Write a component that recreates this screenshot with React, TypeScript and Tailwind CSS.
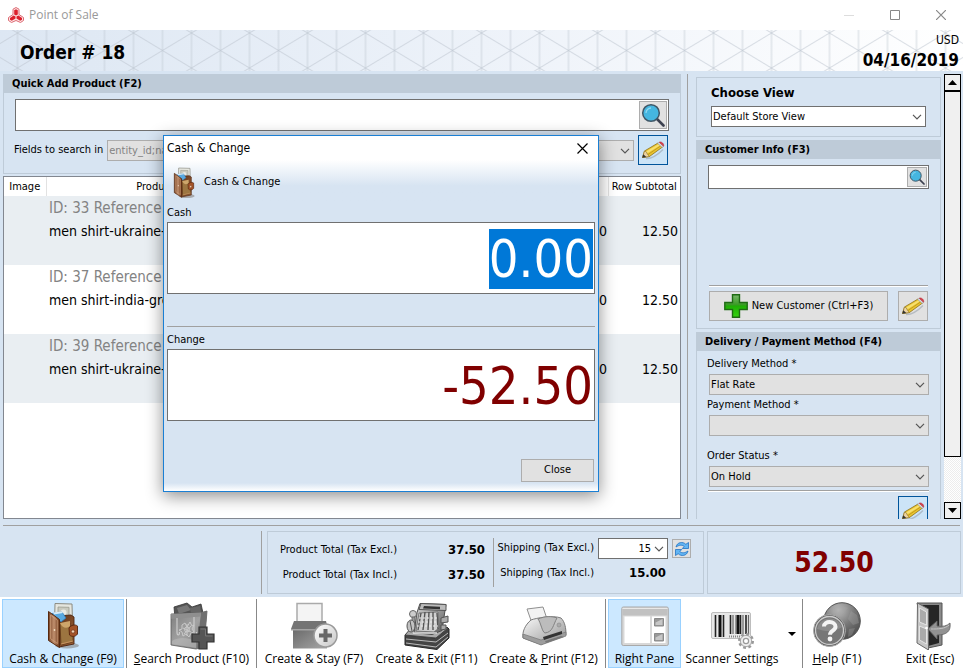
import { useEffect, useRef, type ReactNode } from "react";
import { clsx } from "clsx";

const UI_FONT = "font-['DejaVu_Sans_Condensed','DejaVu_Sans',sans-serif]";
const BAR_FONT = "font-['Open_Sans','Noto_Sans',sans-serif]";

const ROWS = [
  { id: 33, name: "men shirt-ukraine-", price: "12.50", subtotal: "12.50" },
  { id: 37, name: "men shirt-india-green", price: "12.50", subtotal: "12.50" },
  { id: 39, name: "men shirt-ukraine-", price: "12.50", subtotal: "12.50" },
];

/* ---------- icons ---------- */

function AppLogo() {
  return (
    <svg width="16" height="16" viewBox="0 0 16 16" aria-hidden="true">
      <path d="M8 .5 11 2.200v5.300l4.500 3v3l-3 2L8 13.500l-4.500 2-3-2v-3l4.500-3V2.200z" fill="#fbe3e4" stroke="#dd6a73" strokeWidth="1" />
      <path d="M8 2.200 9.800 3.200v4.300L8 8.500 6.200 7.500V3.200z" fill="#dc1f2b" />
      <path d="M7.500 9.500v2L3.800 13.800 2 12.800v-1.900l3.600-2.300z" fill="#dc1f2b" />
      <path d="M8.500 9.500v2l3.700 2.300 1.800-1v-1.900l-3.600-2.300z" fill="#dc1f2b" />
    </svg>
  );
}

function Magnifier({ className }: { className?: string }) {
  return (
    <svg viewBox="0 0 24 24" className={className} aria-hidden="true">
      <path d="m16 16 6.500 6.500" stroke="#3c4150" strokeWidth="2.600" strokeLinecap="round" />
      <circle cx="10" cy="10" r="8.300" fill="#45b6e0" stroke="#3f5767" strokeWidth="1.500" />
      <path d="M5 10a5 5 0 0 1 5-5" fill="none" stroke="#8fd8f0" strokeWidth="1.300" />
    </svg>
  );
}

function Pencil() {
  return (
    <svg width="24" height="24" viewBox="0 0 24 24" aria-hidden="true">
      <path d="M5 20.500c5 .4 10-2 17-9" stroke="#9aa4ad" strokeWidth="1.500" fill="none" opacity=".6" />
      <path d="M1.500 19.500 3.500 13 17 5l4.500 4-13 9.500z" fill="#e9c52f" stroke="#8d701d" strokeWidth=".8" />
      <path d="m4.500 13.800 13-7.600 1.300 1.200L6 15.500z" fill="#f7e070" />
      <path d="m7 16.500 13-8.800" stroke="#bf951b" strokeWidth=".9" />
      <path d="M1.500 19.500 3.500 13l2 1 .8 2 2.200 2.500z" fill="#ecd3a2" stroke="#8d701d" strokeWidth=".6" />
      <path d="m1.300 19.700 1-3.400 3 2.600z" fill="#333" />
      <path d="m16.500 5.300 1.700-1 4.300 3.900-1.400 1.200z" fill="#d9dde0" stroke="#8d8d8d" strokeWidth=".5" />
      <path d="M18.300 4.200c2.200-1 5 1.700 4.300 4z" fill="#e0424e" stroke="#b22936" strokeWidth=".6" />
    </svg>
  );
}

function PlusIcon() {
  return (
    <svg width="24" height="24" viewBox="0 0 24 24" aria-hidden="true">
      <defs>
        <linearGradient id="plus" x2="0" y2="1">
          <stop offset="0" stopColor="#7bb96c" />
          <stop offset=".45" stopColor="#3a9a26" />
          <stop offset=".5" stopColor="#1fae05" />
          <stop offset="1" stopColor="#35d510" />
        </linearGradient>
      </defs>
      <path d="M8.500.8h7v7.700h7.700v7h-7.700v7.700h-7v-7.700H.8v-7h7.700z" fill="url(#plus)" stroke="#1f6b14" strokeWidth="1.400" />
    </svg>
  );
}

function RefreshIcon() {
  return (
    <svg width="16" height="16" viewBox="0 0 16 16" aria-hidden="true">
      <path d="M2 6C3 1 9 .3 11.800 3.300L14.500 1.500v6H8.300l1.900-2C8 3.500 5 4 2 6z" fill="#63b5f3" stroke="#2272c3" strokeWidth=".8" />
      <path d="M14 10c-1 5-7 5.700-9.800 2.700L1.500 14.500v-6h6.200l-1.900 2C8 12.500 11 12 14 10z" fill="#63b5f3" stroke="#2272c3" strokeWidth=".8" />
    </svg>
  );
}

function Wallet({ className }: { className?: string }) {
  return (
    <svg viewBox="0 0 32 48" className={className} aria-hidden="true">
      <defs>
        <linearGradient id="leather" x2="1">
          <stop offset="0" stopColor="#7a4526" />
          <stop offset=".5" stopColor="#c08f6e" />
          <stop offset="1" stopColor="#6b3517" />
        </linearGradient>
        <linearGradient id="back" x2="1" y2="1">
          <stop offset="0" stopColor="#5a3017" />
          <stop offset="1" stopColor="#a06237" />
        </linearGradient>
      </defs>
      <ellipse cx="20" cy="43.500" rx="12" ry="3" fill="#50402f" opacity=".35" />
      <path d="m8 1.500 17 .5.500 18-18 3z" fill="#e5e6df" stroke="#8b8b82" strokeWidth="1" />
      <path d="m11 5 11 .3v11L11 17z" fill="#c9cabf" stroke="#9a9a8e" strokeWidth=".8" />
      <circle cx="16.500" cy="10.500" r="3" fill="#e9eae4" />
      <path d="m10 14 14-1 3 2v27l-15 3z" fill="url(#back)" stroke="#4c2410" strokeWidth=".9" />
      <path d="m5 11.500 10-1.500 4 6-5 4z" fill="#59a9e0" stroke="#2d78b8" strokeWidth=".7" />
      <path d="m6 10.500 9-1 1 1.500-9 1.500z" fill="#d8ecf8" />
      <path d="M13 21h10v6l3 2v11l-12 3z" fill="#9c7540" stroke="#5b3516" strokeWidth=".7" />
      <path d="M13 21c2 5 7 6 10 3v-5z" fill="#cda66b" />
      <path d="m1.500 9.500 11 8v28l-11-7z" fill="url(#leather)" stroke="#56290f" strokeWidth="1" />
      <path d="m3.500 13 7.200 5.500v23l-7.200-4.800z" fill="none" stroke="#d9a984" strokeWidth=".6" />
      <circle cx="7.500" cy="28" r=".9" fill="#f1dbc0" />
      <path d="M22 26c2-3 6-4 8.500-2v8c-2 3-6 3-8 1z" fill="#a35328" stroke="#54230d" strokeWidth=".9" />
      <circle cx="26" cy="29.500" r="1.700" fill="#f0d2b5" stroke="#6b3015" strokeWidth=".7" />
      <path d="m14 42 12-3" stroke="#d69b6a" strokeWidth=".8" />
    </svg>
  );
}

function ShoppingBag() {
  return (
    <svg width="48" height="48" viewBox="0 0 48 48" aria-hidden="true">
      <defs>
        <linearGradient id="bag" x2="1" y2="1">
          <stop offset="0" stopColor="#7d7d7d" />
          <stop offset=".5" stopColor="#a2a2a2" />
          <stop offset="1" stopColor="#6c6c6c" />
        </linearGradient>
      </defs>
      <path d="m6 5 13-4 5 4 9-3 2 9-28 5z" fill="#555" stroke="#333" strokeWidth=".8" />
      <path d="m9 6 10-3 4 5-12 4z" fill="#777" />
      <path d="m22 6 10-2 1 6-10 1z" fill="#666" />
      <path d="m3 12 31-1.500L39 9l-3 36-8 2-25-4z" fill="url(#bag)" stroke="#5c5c5c" strokeWidth=".8" />
      <path d="m33 10.500 6-1.500-3 36-7 1.500z" fill="#707070" />
      <path d="m3 12 30-1.500-.5 4L3.500 17z" fill="#8f8f8f" />
      <path d="M9 16v14c0 4 2.500 4 2.500 0M26 15v15c0 4 2.500 4 2.500 0" fill="none" stroke="#ccc" strokeWidth="1.200" />
      <g fill="none" stroke="#c9c9c9" strokeWidth="1">
        <path d="m14 23 3-2 2 4 3-5 2 4 2-1-2 4 2 3-3 1-2 4-3-3-3 2-1-4-3-2 3-1z" />
        <circle cx="19" cy="27.500" r="2.500" />
        <path d="m15 26 8 4m0-6-7 8m3-10v12" />
      </g>
      <path d="M4 39c8-5 18-3 24 1v6L4 42z" fill="#b9b9b9" opacity=".6" />
      <path d="M31 25h8v7h7v8h-7v7h-8v-7h-7v-8h7z" fill="#555" stroke="#333" strokeWidth="1.200" />
      <path d="M32.500 27h5v7h7" fill="none" stroke="#777" />
    </svg>
  );
}

function BoxPlus() {
  return (
    <svg width="48" height="48" viewBox="0 0 48 48" aria-hidden="true">
      <defs>
        <linearGradient id="box" x2="1" y2="1">
          <stop offset="0" stopColor="#676767" />
          <stop offset="1" stopColor="#a6a6a6" />
        </linearGradient>
        <linearGradient id="disc" x2="1" y2="1">
          <stop offset="0" stopColor="#fff" />
          <stop offset="1" stopColor="#c6c6c6" />
        </linearGradient>
      </defs>
      <path d="M7 1.500h25V22H7z" fill="#f4f4f4" stroke="#aaa" strokeWidth="1.500" />
      <path d="M3 25h34v21.500H3z" fill="url(#box)" />
      <path d="M4 19h32l2 8H1z" fill="#747474" />
      <path d="M1 27h37v1.500H1z" fill="#a4a4a4" />
      <circle cx="35.500" cy="33.500" r="11.500" fill="url(#disc)" stroke="#9a9a9a" strokeWidth="1.500" />
      <path d="M33.500 27h4v4.500H42v4h-4.500V40h-4v-4.500H29v-4h4.500z" fill="#686868" />
    </svg>
  );
}

function CashRegister() {
  return (
    <svg width="48" height="48" viewBox="0 0 48 48" aria-hidden="true">
      <defs>
        <linearGradient id="reg" x2="1" y2="1">
          <stop offset="0" stopColor="#ddd" />
          <stop offset="1" stopColor="#555" />
        </linearGradient>
      </defs>
      <path d="m2 33 30 3 12-11 2 2v9L34 47.500 2 43z" fill="#444" stroke="#272727" />
      <path d="m2 33 7-8h27l9 1-12 10z" fill="#aaa" stroke="#444" />
      <path d="m3 37 30 3 12-9M3 41l30 4 12-10" fill="none" stroke="#bbb" strokeWidth="1" />
      <path d="m17 1.500 26 1-1 6-3 20-10 4-18-2 3-20z" fill="url(#reg)" stroke="#4c4c4c" />
      <path d="m18 1.500 25 1v6l-27-1z" fill="#bbb" stroke="#555" />
      <path d="m21 4 16 .7v2.500L20 6.500z" fill="#333" />
      <path d="m16 11 19-1 1 16-5 4-18-1z" fill="#d0d0d0" stroke="#666" strokeWidth=".8" />
      <path d="m18 11-3 17M22 10l-2 18M26 10l-1 18M30 10v18M34 11l1 16" stroke="#555" strokeWidth="1.400" />
      <path d="M16 16h19M15 20h20M14 24h21" stroke="#eee" strokeWidth="1.200" strokeDasharray="2 2" />
      <circle cx="10" cy="12" r="3.500" fill="#ccc" stroke="#666" />
      <path d="M9 15h3v9H9z" fill="#999" stroke="#555" strokeWidth=".7" />
      <ellipse cx="8" cy="24" rx="4" ry="6" fill="#c2c2c2" stroke="#555" />
      <path d="m7 19 2 10" stroke="#555" />
      <path d="m38 16 7-2v6l-7 1zM38 23h5v4l-5 1z" fill="#aaa" stroke="#555" />
      <path d="M10 31h24" stroke="#eee" strokeWidth="1.300" />
    </svg>
  );
}

function Printer() {
  return (
    <svg width="46" height="48" viewBox="0 0 46 48" aria-hidden="true">
      <defs>
        <linearGradient id="prn" x2="1" y2="1">
          <stop offset="0" stopColor="#fafafa" />
          <stop offset="1" stopColor="#929292" />
        </linearGradient>
      </defs>
      <path d="m6 7 16-2 5 15-15 4z" fill="#f3f3f3" stroke="#8f8f8f" />
      <path d="M10 18c5-2 22-5 30-2 4 4 5 10 5 17L20 42.500 2 36C1 30 4 23 10 18z" fill="url(#prn)" stroke="#7b7b7b" />
      <path d="M17 17c7-3 14-3 19-1-4 7-4 14-12 15-3-1-4-10-7-14z" fill="#bcbcbc" stroke="#808080" />
      <path d="m2 32 18 6 25-8v4L20 43 2 36z" fill="#9d9d9d" stroke="#777" strokeWidth=".7" />
      <path d="m22 35 19-6v3l-18 6z" fill="#333" />
      <path d="m24 39 16-5 3 1-18 6z" fill="#777" />
      <circle cx="38" cy="23" r="2" fill="#aaa" stroke="#888" strokeWidth=".6" />
    </svg>
  );
}

function PaneIcon() {
  return (
    <svg width="48" height="48" viewBox="0 0 48 48" aria-hidden="true">
      <rect x=".8" y="5" width="46.500" height="38.500" rx="1.500" fill="#d8d8d8" stroke="#a9a9a9" />
      <path d="M1.500 5.500h45v8h-45z" fill="#c1c1c1" />
      <path d="M1.500 6.500h45" stroke="#e8e8e8" />
      <path d="M3.500 14.500H29V41H3.500zM31 14.500h13.500V41H31z" fill="#fff" />
      <path d="M33.500 16.500h9v7.500h-9zM33.500 31.500h9V39h-9z" fill="#999" stroke="#8a8a8a" />
      <path d="M34.500 20.500 41.500 17v6h-7zM34.500 35.500 41.500 32v6h-7z" fill="#c7c7c7" />
    </svg>
  );
}

function BarcodeIcon() {
  return (
    <svg width="48" height="48" viewBox="0 0 48 48" aria-hidden="true">
      <rect x="3.500" y="10.500" width="39" height="26" rx="1.500" fill="#e8e8e8" stroke="#bdbdbd" />
      <path d="M7.500 13v22M15.500 13v22M22.500 13v19M32.500 13v19M38 13v19" stroke="#222" strokeWidth="1.600" />
      <path d="M12 13v22M30 13v19" stroke="#111" strokeWidth="3" />
      <path d="M25 13v19M28 13v19M35 13v19M40.500 13v19" stroke="#666" strokeWidth="1.200" />
      <path d="M21 34.500h11" stroke="#888" strokeWidth="2" strokeDasharray="1 1" />
      <circle cx="38" cy="39" r="6.700" fill="#eee" stroke="#999" strokeWidth="2.600" strokeDasharray="2.800 2.460" />
      <circle cx="38" cy="39" r="5.600" fill="#ededed" stroke="#999" strokeWidth=".8" />
      <circle cx="38" cy="39" r="2.600" fill="#fff" stroke="#999" strokeWidth="1.200" />
    </svg>
  );
}

function HelpIcon() {
  return (
    <svg width="48" height="48" viewBox="0 0 48 48" aria-hidden="true">
      <defs>
        <radialGradient id="globe" cx=".4" cy=".2" r=".9">
          <stop offset="0" stopColor="#bbb" />
          <stop offset=".5" stopColor="#777" />
          <stop offset="1" stopColor="#444" />
        </radialGradient>
      </defs>
      <circle cx="29" cy="19" r="18.300" fill="url(#globe)" stroke="#555" />
      <path d="m21 6 8-3 6 3-5 6-8 1zM38 9l6 4 2 8-6 2-5-6zM36 27l6-1-3 7-4 2z" fill="#a4a4a4" opacity=".35" />
      <circle cx="16.500" cy="28.500" r="16" fill="#5f5f5f" stroke="#aaa" />
      <circle cx="16.500" cy="28.500" r="14" fill="#777" stroke="#ccc" strokeWidth="1.300" />
      <path d="M4 27a13 13 0 0 1 25-2c-7 5-16 5-25 2z" fill="#999" opacity=".6" />
      <path d="M11 24.500c0-6 11.500-6 11.500.3 0 4-5.500 3.700-5.500 8" fill="none" stroke="#f4f4f4" strokeWidth="4" />
      <circle cx="17" cy="37" r="2.400" fill="#f4f4f4" />
    </svg>
  );
}

function ExitIcon() {
  return (
    <svg width="48" height="48" viewBox="0 0 48 48" aria-hidden="true">
      <path d="M11 1h25v42l-14 3z" fill="#8a8a8a" stroke="#555" />
      <path d="M14 3h19v38l-11 3z" fill="#262626" />
      <path d="m11.500 1 11 6v41L11 41z" fill="#c6c6c6" stroke="#696969" />
      <path d="m13.500 6 7 4v13l-7-3zM13.500 24l7 3v15l-7-4z" fill="#aaa" stroke="#e8e8e8" strokeWidth=".9" />
      <circle cx="20.500" cy="26" r="1.300" fill="#fff" />
      <path d="M22 27 31 19v5c6 1 10 0 13-3 1 8-3 12-13 12v4z" fill="#929292" stroke="#666" strokeWidth=".9" />
      <path d="M25 27c7 0 14 0 18-4" stroke="#c4c4c4" fill="none" />
    </svg>
  );
}

/* ---------- controls ---------- */

interface SelectProps {
  label?: string;
  id?: string;
  value: string;
  className?: string;
  white?: boolean;
  disabled?: boolean;
  alignRight?: boolean;
}

function Select({ label, id, value, className, white, disabled, alignRight }: SelectProps) {
  return (
    <div className={clsx("relative", className)}>
      <select
        id={id}
        aria-label={label}
        disabled={disabled}
        defaultValue={value}
        className={clsx(
          "block h-[21px] w-full appearance-none border pl-px text-[11px] leading-[19px]",
          white ? "border-[#707070] bg-white" : "border-[#adadad] bg-[#e1e1e1]",
          disabled ? "text-[#838383]" : "text-black",
          alignRight ? "pr-4 text-right" : "pr-5",
        )}
      >
        <option value={value}>{value}</option>
      </select>
      <svg
        width="10"
        height="6"
        viewBox="0 0 10 6"
        className="pointer-events-none absolute top-2 right-1"
        aria-hidden="true"
      >
        <path d="m1 .8 4 4 4-4" fill="none" stroke="#555" strokeWidth="1.200" />
      </svg>
    </div>
  );
}

function EditButton({ active, label }: { active?: boolean; label: string }) {
  return (
    <button
      type="button"
      aria-label={label}
      className={clsx(
        "flex size-[30px] shrink-0 items-center justify-center border",
        active ? "border-[#00549b] bg-[#cce4f7]" : "border-[#adadad] bg-[#e1e1e1]",
      )}
    >
      <Pencil />
    </button>
  );
}

function Panel({ title, className, children }: { title?: string; className?: string; children: ReactNode }) {
  return (
    <section className={clsx("border border-[#becbd8]", className)}>
      {title && (
        <h2 className="h-[18px] bg-[#becbd8] px-2 text-[11px] leading-[18px] font-bold">{title}</h2>
      )}
      {children}
    </section>
  );
}

function Rule() {
  return <div className="h-0.5 border-t border-[#a0a0a0] bg-white" />;
}

/* ---------- sections ---------- */

function TitleBar() {
  return (
    <header className="flex h-[30px] shrink-0 items-center bg-white pl-2">
      <AppLogo />
      <h1 className={clsx("ml-[5px] flex-1 text-[12px] text-[#999]", BAR_FONT)}>Point of Sale</h1>
      <div className="flex gap-9 pr-[17px] text-[#888]">
        <button type="button" aria-label="Minimize">
          <svg width="10" height="10" viewBox="0 0 10 10"><path d="M0 5.500h10" stroke="#ddd" /></svg>
        </button>
        <button type="button" aria-label="Maximize">
          <svg width="10" height="10" viewBox="0 0 10 10"><path d="M.5.5h9v9h-9z" fill="none" stroke="currentColor" /></svg>
        </button>
        <button type="button" aria-label="Close window">
          <svg width="10" height="10" viewBox="0 0 10 10"><path d="m0 0 10 10M10 0 0 10" stroke="currentColor" strokeWidth="1.200" /></svg>
        </button>
      </div>
    </header>
  );
}

function Banner() {
  return (
    <div className="relative flex h-[41px] shrink-0 items-center justify-between bg-linear-to-r from-[#dde7f3] via-[#edf2f9] to-white pt-0.5 pr-1 pl-5">
      <svg className="absolute inset-0 size-full" aria-hidden="true">
        <defs>
          <pattern id="tri" x="17.500" y="3" width="58" height="35" patternUnits="userSpaceOnUse">
            <path d="M0 0v35M58 0v35M29 0v35M0 0l58 35M58 0 0 35" fill="none" stroke="#bcc3ce" strokeOpacity=".65" />
          </pattern>
        </defs>
        <rect width="100%" height="100%" fill="url(#tri)" />
      </svg>
      <p className="relative text-[19px] leading-6 font-bold">Order # 18</p>
      <div className="relative text-right">
        <p className="text-[12px] leading-4">USD</p>
        <p className="text-[17px] leading-6 font-bold">04/16/2019</p>
      </div>
    </div>
  );
}

function QuickAdd() {
  return (
    <Panel title="Quick Add Product (F2)" className="h-[100px] shrink-0">
      <div className="mx-[11px] mt-1.5 flex h-8 border border-[#707070] bg-white">
        <input aria-label="Quick add product" className="min-w-0 flex-1 px-2 text-base outline-none" />
        <button
          type="button"
          aria-label="Search product"
          className="m-px flex w-7 items-center justify-center border border-[#adadad] bg-[#e1e1e1]"
        >
          <Magnifier className="size-6" />
        </button>
      </div>
      <div className="mt-1 mr-3 ml-2.5 flex items-center gap-1">
        <label htmlFor="fields" className="text-[11px] whitespace-nowrap">Fields to search in</label>
        <Select id="fields" value="entity_id;name;sku" disabled className="flex-1" />
        <EditButton active label="Edit search fields" />
      </div>
    </Panel>
  );
}

function OrderTable() {
  return (
    <div className="min-h-0 flex-1 overflow-hidden border border-[#828790] bg-white">
      <table className="w-full table-fixed border-collapse">
        <thead>
          <tr className="h-[19px] text-[11px]">
            <th className="w-[42px] border-r border-[#e2e2e2] p-0 pt-0.5 font-normal">Image</th>
            <th className="w-[218px] border-r border-[#e2e2e2] p-0 pt-0.5 font-normal">Product</th>
            <th className="border-r border-[#e2e2e2] p-0 pt-0.5 font-normal">Price</th>
            <th className="w-[72px] p-0 pt-0.5 font-normal whitespace-nowrap">Row Subtotal</th>
          </tr>
        </thead>
        <tbody>
          {ROWS.map((row) => (
            <tr key={row.id} className="h-[69px] align-top text-[14px] leading-[23px] odd:bg-[#e9eef2]">
              <td className="p-0" />
              <td className="p-0 pl-[3px] whitespace-nowrap">
                <div className="text-[15px] leading-6 text-[#838383]">ID: {row.id} Reference</div>
                <div>{row.name}</div>
              </td>
              <td className="p-0 pt-6 pr-px text-right">{row.price}</td>
              <td className="p-0 pt-6 pr-0.5 text-right">{row.subtotal}</td>
            </tr>
          ))}
        </tbody>
      </table>
    </div>
  );
}

function RightPane() {
  return (
    <div className="flex w-[245px] shrink-0 flex-col gap-[3px] overflow-hidden pt-[3px]">
      <Panel className="h-[60px] shrink-0 px-3.5 pt-1.5">
        <label htmlFor="view" className="block text-[13px] leading-[18px] font-bold">Choose View</label>
        <Select id="view" value="Default Store View" white className="mt-1" />
      </Panel>

      <Panel title="Customer Info (F3)" className="flex h-[189px] shrink-0 flex-col">
        <div className="mx-[11px] mt-1.5 flex h-6 border border-[#707070] bg-white">
          <input aria-label="Customer search" className="min-w-0 flex-1 px-1 text-[12px] outline-none" />
          <button
            type="button"
            aria-label="Search customer"
            className="m-px flex w-5 items-center justify-center border border-[#adadad] bg-[#e1e1e1]"
          >
            <Magnifier className="size-4" />
          </button>
        </div>
        <div className="mx-3 mt-auto mb-[7px]">
          <Rule />
          <div className="mt-1 flex gap-2.5">
            <button
              type="button"
              className="flex h-[30px] flex-1 items-center justify-center gap-1 border border-[#adadad] bg-[#e1e1e1] text-[11px] whitespace-nowrap"
            >
              <PlusIcon />
              New Customer (Ctrl+F3)
            </button>
            <EditButton label="Edit customer" />
          </div>
        </div>
      </Panel>

      <Panel title="Delivery / Payment Method (F4)" className="h-[200px] shrink-0">
        <div className="mt-[3px] mr-[11px] ml-2.5 text-[11px]">
          <label htmlFor="delivery" className="block h-5 leading-5">Delivery Method *</label>
          <Select id="delivery" value="Flat Rate" className="ml-0.5" />
          <label htmlFor="payment" className="block h-5 leading-5">Payment Method *</label>
          <Select id="payment" value="" className="ml-0.5" />
          <label htmlFor="status" className="mt-2.5 block h-5 leading-5">Order Status *</label>
          <Select id="status" value="On Hold" className="ml-0.5" />
          <div className="mt-[3px] ml-px">
            <Rule />
          </div>
          <div className="mt-1 mr-px flex justify-end">
            <EditButton active label="Edit delivery" />
          </div>
        </div>
      </Panel>
    </div>
  );
}

function ScrollBar() {
  return (
    <div className="mr-0.5 ml-[3px] flex w-[17px] shrink-0 flex-col bg-[#f4f4f4]">
      <button type="button" aria-label="Scroll up" className="flex h-[17px] items-center justify-center border border-black bg-[#f0f0f0]">
        <svg width="9" height="5" viewBox="0 0 9 5"><path d="M4.500 0 9 5H0z" /></svg>
      </button>
      <div className="h-[366px] shrink border border-black bg-[#f0f0f0]" />
      <div className="flex-1 bg-[repeating-conic-gradient(#ededed_0_25%,#fff_0_50%)] bg-[length:2px_2px]" />
      <button type="button" aria-label="Scroll down" className="flex h-[17px] items-center justify-center border border-black bg-[#f0f0f0]">
        <svg width="9" height="5" viewBox="0 0 9 5"><path d="M0 0h9L4.500 5z" /></svg>
      </button>
    </div>
  );
}

function Totals() {
  return (
    <div className="mt-[5px] mb-[3px] flex h-[63px] shrink-0 pr-0.5 text-[11px]">
      <div className="flex-1 border-r border-[#a0a0a0]" />
      <Panel className="ml-[5px] flex w-[437px] shrink-0 py-1.5">
        <dl className="grid w-[226px] grid-cols-[129px_1fr] content-between items-center border-r border-[#a0a0a0] pr-2 text-right">
          <dt className="leading-6">Product Total (Tax Excl.)</dt>
          <dd className="text-[13px] font-bold">37.50</dd>
          <dt className="leading-6">Product Total (Tax Incl.)</dt>
          <dd className="text-[13px] font-bold">37.50</dd>
        </dl>
        <div className="grid flex-1 grid-cols-[100px_70px_19px] content-start items-center gap-x-1 text-right">
          <label htmlFor="shipping">Shipping (Tax Excl.)</label>
          <Select id="shipping" value="15" white alignRight />
          <button
            type="button"
            aria-label="Recalculate shipping"
            className="flex size-[19px] items-center justify-center border border-[#adadad] bg-[#e1e1e1]"
          >
            <RefreshIcon />
          </button>
          <span className="leading-[27px]">Shipping (Tax Incl.)</span>
          <span className="pr-0.5 text-[13px] font-bold">15.00</span>
        </div>
      </Panel>
      <Panel className="ml-[3px] flex w-[254px] shrink-0 items-center justify-center">
        <output className="text-[28px] leading-8 font-bold text-[#800000]">52.50</output>
      </Panel>
    </div>
  );
}

interface ToolProps {
  icon: ReactNode;
  active?: boolean;
  divider?: boolean;
  children: ReactNode;
}

function Tool({ icon, active, divider, children }: ToolProps) {
  return (
    <div className="flex py-0.5">
      <button
        type="button"
        className={clsx(
          "flex flex-1 flex-col items-center border pt-0.5 text-[12px] leading-[17px] whitespace-nowrap",
          active ? "mx-0.5 border-[#99d1ff] bg-[#cce8ff]" : "border-transparent",
        )}
      >
        {icon}
        <span>{children}</span>
      </button>
      {divider && <div className="w-px bg-[#888]" />}
    </div>
  );
}

function Toolbar() {
  return (
    <nav
      className={clsx(
        "grid h-[73px] shrink-0 grid-cols-[127fr_130fr_114fr_111fr_124fr_77fr_98fr_22fr_68fr_26fr_66fr] bg-white",
        BAR_FONT,
      )}
    >
      <Tool icon={<Wallet className="h-12 w-8" />} active divider>Cash &amp; Change (F9)</Tool>
      <Tool icon={<ShoppingBag />} divider><u>S</u>earch Product (F10)</Tool>
      <Tool icon={<BoxPlus />}>Create &amp; Stay (F7)</Tool>
      <Tool icon={<CashRegister />}>Create &amp; Exit (F11)</Tool>
      <Tool icon={<Printer />} divider>Create &amp; <u>P</u>rint (F12)</Tool>
      <Tool icon={<PaneIcon />} active>Right Pane</Tool>
      <Tool icon={<BarcodeIcon />}>Scanner Settings</Tool>
      <button type="button" aria-label="Scanner options" className="my-0.5 flex items-center justify-center border-r border-[#888]">
        <svg width="8" height="4" viewBox="0 0 8 4"><path d="M0 0h8L4 4z" /></svg>
      </button>
      <Tool icon={<HelpIcon />}><u>H</u>elp (F1)</Tool>
      <span />
      <Tool icon={<ExitIcon />}>Exit (Esc)</Tool>
    </nav>
  );
}

function CashDialog() {
  const cashRef = useRef<HTMLInputElement>(null);

  useEffect(() => {
    cashRef.current?.focus();
    cashRef.current?.select();
  }, []);

  return (
    <div
      role="dialog"
      aria-label="Cash & Change"
      className="absolute top-[135px] left-[163px] flex h-[357px] w-[436px] flex-col border border-[#1a7fd4] bg-[#d7e4f2] px-[3px] text-[11px] shadow-[0_4px_16px_rgba(0,0,0,0.45)]"
    >
      <div className="-mx-[3px] flex h-6 shrink-0 items-center justify-between bg-white pr-2.5 pl-[3px]">
        <span className="text-[12px]">Cash &amp; Change</span>
        <button type="button" aria-label="Close dialog">
          <svg width="11" height="11" viewBox="0 0 11 11"><path d="m.5.5 10 10M10.500.5l-10 10" stroke="#000" strokeWidth="1.200" /></svg>
        </button>
      </div>
      <div className="-mx-[3px] flex h-[43px] shrink-0 items-center bg-linear-to-b from-white to-[#d7e4f2] to-60% pt-0.5 pl-2">
        <Wallet className="h-8 w-6" />
        <span className="ml-2">Cash &amp; Change</span>
      </div>
      <label htmlFor="cash" className="h-[19px] leading-[19px]">Cash</label>
      <input
        id="cash"
        ref={cashRef}
        defaultValue="0.00"
        className="h-[72px] border border-[#707070] bg-white px-px pt-0.5 text-right text-[52px] leading-16 outline-none selection:bg-[#0078d7] selection:text-white"
      />
      <div className="mt-8 border-t border-[#a0a0a0]" />
      <label htmlFor="change" className="mt-[3px] h-[19px] leading-[19px]">Change</label>
      <input
        id="change"
        readOnly
        value="-52.50"
        className="h-[72px] border border-[#707070] bg-white px-px pt-0.5 text-right text-[52px] leading-16 text-[#800000] outline-none"
      />
      <button type="button" className="mt-[38px] mr-px h-[23px] w-[73px] shrink-0 self-end border border-[#adadad] bg-[#e1e1e1]">
        Close
      </button>
      <div className="-mx-[3px] mt-auto h-2 bg-linear-to-b from-[#d7e4f2] to-white" />
    </div>
  );
}

export default function App() {
  return (
    <div className={clsx("relative flex h-screen flex-col overflow-hidden bg-[#d7e4f2] text-black", UI_FONT)}>
      <TitleBar />
      <Banner />
      <main className="flex min-h-0 flex-1 pt-[3px]">
        <div className="mr-1.5 ml-[3px] flex min-w-0 flex-1 flex-col gap-0.5">
          <QuickAdd />
          <OrderTable />
        </div>
        <div className="mr-2 w-px bg-[#a0a0a0]" />
        <RightPane />
        <ScrollBar />
      </main>
      <div className="mx-[3px] mt-1.5 border-t border-[#a0a0a0]" />
      <Totals />
      <Toolbar />
      <CashDialog />
    </div>
  );
}
